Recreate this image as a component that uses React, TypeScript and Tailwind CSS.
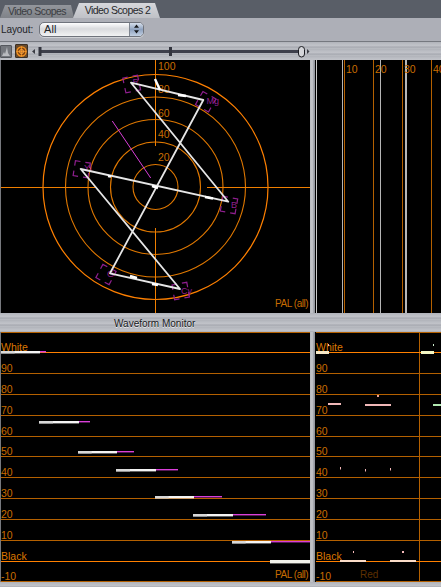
const SANS = '"Liberation Sans", Arial, sans-serif';

const metalH =
  "bg-[repeating-linear-gradient(180deg,#a4a7ae_0px,#c2c4ca_1px,#aeb1b8_2px,#cbcdd2_3px,#b4b6bd_4px,#a9acb3_6px,#c6c8cd_7px)]";
const metalV =
  "bg-[linear-gradient(90deg,#c4c6ca_0px,#aeb1b6_1px,#d0d1d5_2px,#a9acb2_3px,#9ea1a8_4px,#8b8e95_5px,#000000_5px)]";

const ORANGE = "#c96c00";
const LINE = "#b46000";
const BRIGHT = "#ff8000";

function Tab({ label, active }: { label: string; active?: boolean }) {
  return (
    <div
      className={
        active
          ? "-ml-[1px] z-10 h-[15px] w-[87px] flex items-center justify-center pl-[2px] text-[10.5px] tracking-[-0.55px] text-[#26282c] bg-[linear-gradient(180deg,#d6d7db,#bfc1c7)] [clip-path:polygon(6px_0,calc(100%-5px)_0,100%_100%,0_100%)]"
          : "h-[13px] w-[74px] flex items-center justify-center text-[10.5px] tracking-[-0.55px] text-[#3b3d42] bg-[linear-gradient(180deg,#93969c,#7f8288)] [clip-path:polygon(5px_0,calc(100%-3px)_0,100%_100%,0_100%)]"
      }
    >
      {label}
    </div>
  );
}

function Select() {
  return (
    <div className="ml-[6px] flex h-[15px] w-[105px] overflow-hidden rounded-[5px] border border-[#6f737c] bg-[linear-gradient(180deg,#fdfdfe,#d9dadd_45%,#f2f3f4)] shadow-[0_1px_0_#d0d2d6]">
      <span className="flex-1 pl-[4px] text-[11px] leading-[13px] text-[#202226]">All</span>
      <span className="flex w-[14px] items-center justify-center border-l border-[#7e8590] bg-[linear-gradient(180deg,#d6dfec,#8fa2bf_50%,#c2d0e2)]">
        <svg width="7" height="10" viewBox="0 0 7 10">
          <path d="M3.5 0.5 L6 3.8 H1 Z M1 6.2 H6 L3.5 9.5 Z" fill="#15171a" />
        </svg>
      </span>
    </div>
  );
}

function Controls() {
  return (
    <div className={`flex h-[18px] items-center ${metalH}`}>
      <div className="flex h-[13px] w-[12px] items-end justify-center rounded-[1px] border border-[#55585e] bg-[#74777d]">
        <svg width="10" height="11" viewBox="0 0 10 11">
          <path d="M1 10 L3 6 L4 8 L6 1 L7 7 L9 10 Z" fill="#b9bbbf" />
        </svg>
      </div>
      <div className="ml-[3px] flex h-[14px] w-[13px] items-center justify-center rounded-[1px] border border-[#3b3025] bg-[#6a4a2a]">
        <svg width="11" height="11" viewBox="0 0 11 11">
          <circle cx="5.5" cy="5.5" r="4.6" fill="#8a4a10" stroke="#ff9a20" strokeWidth="1.2" />
          <circle cx="5.5" cy="5.5" r="2" fill="none" stroke="#ffb050" strokeWidth="0.9" />
          <path d="M5.5 0.5 V10.5 M0.5 5.5 H10.5" stroke="#ffa030" strokeWidth="0.7" />
        </svg>
      </div>
      <svg width="413" height="18" viewBox="28 42 413 18" className="shrink-0">
        <path d="M32 51.5 L35 49 V54 Z" fill="#3a3c44" />
        <rect x="39" y="50" width="262" height="3" fill="#3d3f4b" />
        <rect x="38.5" y="47" width="3" height="9" fill="#33353f" />
        <rect x="169" y="47" width="3" height="9" fill="#33353f" />
        <rect x="298.5" y="46.5" width="6" height="10.5" rx="3" fill="#d5d6da" stroke="#1a1b20" strokeWidth="1" />
        <path d="M309.5 51.5 L307 49 V54 Z" fill="#3a3c44" />
      </svg>
    </div>
  );
}

const targets = [
  { x: 131.7, y: 84, a: -12, t: "R", lx: 132.5, ly: 85 },
  { x: 205.7, y: 101.7, a: 30, t: "Mg", lx: 206.5, ly: 104 },
  { x: 81.7, y: 169.3, a: 9, t: "Yl", lx: 84, ly: 171 },
  { x: 229, y: 205, a: 10, t: "B", lx: 231, ly: 208 },
  { x: 106, y: 274.5, a: 28, t: "G", lx: 107, ly: 277 },
  { x: 180.7, y: 291, a: -10, t: "Cy", lx: 181, ly: 294 },
];

function Vectorscope() {
  const s = 7.5;
  const a = 5;
  const bracket = `M${-s} ${-s + a} V${-s} H${-s + a} M${s - a} ${-s} H${s} V${-s + a} M${s} ${s - a} V${s} H${s - a} M${-s + a} ${s} H${-s} V${s - a}`;
  return (
    <svg width="309" height="253" viewBox="1 60 309 253" className="block bg-black" style={{ fontFamily: SANS }}>
      {[22.5, 45, 67.5, 90].map((r) => (
        <circle key={r} cx="155.5" cy="187" r={r} fill="none" stroke="#e07800" strokeWidth="1.1" />
      ))}
      <circle cx="155.5" cy="187" r="112.5" fill="none" stroke={BRIGHT} strokeWidth="1.2" />
      <path
        d="M155.5 60 V146 M155.5 228 V313 M0 187.5 H96 M207 187.5 H310"
        stroke="#f07f00"
        strokeWidth="1"
        shapeRendering="crispEdges"
      />
      {[
        ["100", 70],
        ["80", 93],
        ["60", 116.5],
        ["40", 138],
        ["20", 161],
      ].map(([t, y]) => (
        <text key={t} x="158" y={y} fontSize="10.5" fill={ORANGE}>
          {t}
        </text>
      ))}
      {targets.map((g) => (
        <g key={g.t}>
          <path d={bracket} transform={`translate(${g.x} ${g.y}) rotate(${g.a})`} fill="none" stroke="#8f1f8f" strokeWidth="1.2" />
          <text x={g.lx} y={g.ly} fontSize="9" fill="#8f1f8f">
            {g.t}
          </text>
        </g>
      ))}
      <path d="M112.3 121 L150.7 178" stroke="#d93fd9" strokeWidth="1" />
      <path
        d="M131 82.7 L203.3 100 L110 273.3 L180 289 L80.7 169 L228.3 201.7 Z"
        fill="none"
        stroke="#e6e6e6"
        strokeWidth="1.8"
        strokeLinejoin="round"
      />
      <path
        d="M155 79 L160 90 M178 95 L186 96 M108 176 L111 176.5 M205 197 L213 198.5 M130 276 L137 278 M152 284 L158 285 M152 186 L158 188"
        stroke="#ffffff"
        strokeWidth="2.4"
      />
      <text x="275" y="307" fontSize="10" letterSpacing="-0.45" fill={ORANGE}>
        PAL (all)
      </text>
    </svg>
  );
}

function Parade() {
  return (
    <svg width="125" height="253" viewBox="316 60 125 253" className="block bg-black" style={{ fontFamily: SANS }}>
      <g shapeRendering="crispEdges">
        <path d="M316.5 60 V313" stroke="#c8c8c8" strokeWidth="1" />
        <path d="M342 60 V313 M380.5 60 V313" stroke="#b5b5b5" strokeWidth="1" />
        <rect x="405" y="60" width="2.4" height="253" fill="#b8b8b8" />
        <path d="M344.5 60 V313 M373.5 60 V313 M402.5 60 V313 M431.5 60 V313" stroke={LINE} strokeWidth="1" />
      </g>
      {[
        ["10", 346],
        ["20", 375],
        ["30", 404],
        ["40", 433],
      ].map(([t, x]) => (
        <text key={t} x={x} y="73" fontSize="10.5" fill={ORANGE}>
          {t}
        </text>
      ))}
    </svg>
  );
}

const rows: [string, number, number, boolean][] = [
  ["White", 352.5, 350.5, true],
  ["90", 373.5, 371.5, false],
  ["80", 394.5, 392.5, false],
  ["70", 415.5, 413.5, false],
  ["60", 436.5, 434.5, false],
  ["50", 456.5, 454.5, false],
  ["40", 477.5, 475.5, false],
  ["30", 498.5, 496.5, false],
  ["20", 519.5, 517.5, false],
  ["10", 540.5, 538.5, false],
  ["Black", 561.5, 559.5, true],
];

function Graticule({ x }: { x: number }) {
  return (
    <>
      <path d="M0 332.5 H441" stroke={LINE} strokeWidth="1" shapeRendering="crispEdges" />
      {rows.map(([t, y, ty, bright]) => (
        <g key={t}>
          <path d={`M0 ${y} H441`} stroke={bright ? BRIGHT : LINE} strokeWidth="1" shapeRendering="crispEdges" />
          <text x={x} y={ty} fontSize="10.5" fill={bright ? "#dc7700" : ORANGE}>
            {t}
          </text>
        </g>
      ))}
      <path d="M0 581.5 H441" stroke={LINE} strokeWidth="1" shapeRendering="crispEdges" />
      <text x={x} y="579.5" fontSize="10.5" fill={ORANGE}>
        -10
      </text>
    </>
  );
}

const segs: [number, number, number, number, string][] = [
  [1, 40, 46, 351, "#d93fd9"],
  [39, 79, 90, 421, "#d93fd9"],
  [78, 117, 134, 451, "#b83ab8"],
  [116, 156, 178, 469, "#b83ab8"],
  [155, 194, 222, 496, "#d93fd9"],
  [193, 233, 266, 514, "#d93fd9"],
  [232, 271, 310, 541, "#d93fd9"],
];

function Waveform() {
  return (
    <svg width="309" height="250" viewBox="1 332 309 250" className="block bg-black" style={{ fontFamily: SANS }}>
      <Graticule x={1} />
      {segs.map(([a, b, c, y]) => (
        <g key={a}>
          <rect x={a} y={y} width={b - a} height="2.4" fill="#f4f4f4" />
          <rect x={a} y={y} width={(b - a) * 0.35} height="2.4" fill="#d8d8d8" />
          <rect x={b} y={y} width={c - b} height="1.4" fill="#d93fd9" />
        </g>
      ))}
      <rect x="270" y="560" width="40" height="3.4" fill="#f2f2ea" />
      <text x="275" y="578" fontSize="10" letterSpacing="-0.45" fill={ORANGE}>
        PAL (all)
      </text>
    </svg>
  );
}

function RedWaveform() {
  const bars: [number, number, number, number, string][] = [
    [316, 351, 13, 3, "#f6e8c6"],
    [421, 351, 13, 3, "#f2f6c4"],
    [328, 344, 1, 2, "#f0b8b8"],
    [433, 344, 1, 2, "#cdeccd"],
    [328, 403, 13, 2, "#f0b8b8"],
    [365, 404, 26, 2, "#f0b8b8"],
    [377, 395, 2, 2, "#f0a090"],
    [433, 404, 8, 2, "#b0e8b0"],
    [340, 467, 1, 2.5, "#f4b8b8"],
    [365, 469, 1, 2.5, "#f4b8b8"],
    [390, 468, 1, 2.5, "#f4b8b8"],
    [340, 560, 26, 2, "#fbdcc8"],
    [390, 560, 26, 2, "#fbdcc8"],
    [353, 551, 1, 2, "#f4b8b8"],
    [402, 551, 2, 2, "#f4b8b8"],
  ];
  return (
    <svg width="125" height="250" viewBox="316 332 125 250" className="block bg-black" style={{ fontFamily: SANS }}>
      <path d="M419.5 332 V582" stroke={LINE} strokeWidth="1" shapeRendering="crispEdges" />
      <Graticule x={316} />
      {bars.map(([x, y, w, h, c], i) => (
        <rect key={i} x={x} y={y} width={w} height={h} fill={c} />
      ))}
      <text x="360" y="578" fontSize="10" fill="#5e3000">
        Red
      </text>
    </svg>
  );
}

export default function App() {
  return (
    <div className="flex h-[587px] w-[441px] flex-col overflow-hidden bg-[#b4b6bc]" style={{ fontFamily: SANS }}>
      <div className="flex h-[18px] items-end bg-[#595e67]">
        <Tab label="Video Scopes" />
        <Tab label="Video Scopes 2" active />
      </div>
      <div className="flex h-[24px] items-center border-b border-[#75787f] bg-[#adafb7] pl-[1px] pb-[1px]">
        <span className="text-[10px] tracking-[-0.1px] text-[#222428]">Layout:</span>
        <Select />
      </div>
      <Controls />
      <div className="flex h-[253px]">
        <div className="w-[310px] border-l border-[#77797e] bg-black">
          <Vectorscope />
        </div>
        <div className={`w-[6px] ${metalV}`} />
        <Parade />
      </div>
      <div className={`flex h-[19px] items-center pl-[114px] pt-[1px] text-[10px] text-[#17181b] [text-shadow:0_1px_0_#e8e9ec] ${metalH}`}>
        Waveform Monitor
      </div>
      <div className="flex h-[250px]">
        <div className="w-[310px] border-l border-[#77797e] bg-black">
          <Waveform />
        </div>
        <div className={`w-[6px] ${metalV}`} />
        <RedWaveform />
      </div>
      <div className={`h-[5px] ${metalH}`} />
    </div>
  );
}
